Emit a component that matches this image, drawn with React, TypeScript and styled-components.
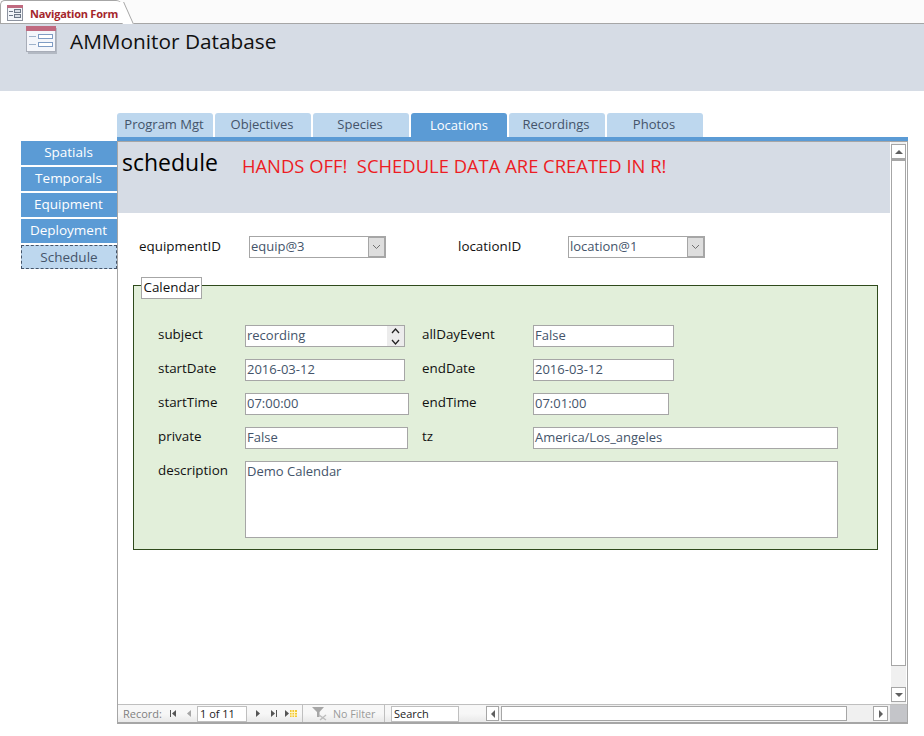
import React from 'react';
import styled, { createGlobalStyle } from 'styled-components';

const GlobalStyle = createGlobalStyle`
    html, body {
        margin: 0;
        padding: 0;
        background: #fff;
        font-family: "Open Sans", "Noto Sans", sans-serif;
    }
`;

const Page = styled.div`
    width: 924px;
    height: 736px;
    overflow: hidden;
    background: #fff;
`;

const DocStrip = styled.div`
    height: 23px;
    border-bottom: 1px solid #a6a6a6;
    background: #fbfbfb;
`;

const DocTab = styled.div`
    position: relative;
    width: 122px;
    height: 23px;
    margin-bottom: -1px;
    box-sizing: border-box;
    padding: 2px 0 0 6px;
    display: flex;
    align-items: center;
    gap: 7px;
    background: #fff;
    border-top: 1px solid #a6a6a6;
    border-left: 1px solid #a6a6a6;
    border-top-left-radius: 5px;
    border-top-right-radius: 6px;
    z-index: 1;

    &::after {
        content: '';
        position: absolute;
        top: 1px;
        right: -7px;
        width: 10px;
        height: 22px;
        background: #fff;
        border-right: 1px solid #a6a6a6;
        transform: skewX(24deg);
    }
`;

const DocTabLabel = styled.span`
    position: relative;
    z-index: 1;
    font-size: 11px;
    font-weight: 700;
    letter-spacing: -0.25px;
    color: #a4262c;
`;

const Header = styled.div`
    height: 67px;
    box-sizing: border-box;
    background: #d6dce5;
    padding: 1px 0 0 26px;
    display: flex;
    align-items: flex-start;
    gap: 12px;
`;

const AppTitle = styled.h1`
    margin: 0;
    font-size: 20.8px;
    line-height: 33px;
    font-weight: 400;
    color: #111;
`;

const Body = styled.div`
    display: flex;
    padding: 22px 0 0 21px;
`;

const SideNav = styled.nav`
    width: 96px;
    padding-top: 28px;
    display: flex;
    flex-direction: column;
    gap: 2px;
`;

const SideButton = styled.div<{ $active?: boolean }>`
    height: 24px;
    box-sizing: border-box;
    display: flex;
    align-items: center;
    justify-content: center;
    padding: 0 ${(p) => (p.$active ? 0 : 1)}px ${(p) => (p.$active ? 0 : 2)}px 0;
    font-size: 13.5px;
    color: ${(p) => (p.$active ? '#44546a' : '#fff')};
    background: ${(p) => (p.$active ? '#bdd7ee' : '#5b9bd5')};
    border: ${(p) => (p.$active ? '1px dashed #44546a' : 'none')};
`;

const Main = styled.div`
    width: 791px;
`;

const TabRow = styled.div`
    display: flex;
    gap: 2px;
    height: 24px;
`;

const TopTab = styled.div<{ $active?: boolean }>`
    width: 96px;
    height: 24px;
    box-sizing: border-box;
    display: flex;
    align-items: center;
    justify-content: center;
    padding: 0 ${(p) => (p.$active ? 0 : 2)}px ${(p) => (p.$active ? 0 : 2)}px 0;
    border-radius: 3px 3px 0 0;
    font-size: 13px;
    color: ${(p) => (p.$active ? '#fff' : '#44546a')};
    background: ${(p) => (p.$active ? '#5b9bd5' : '#bdd7ee')};
`;

const BlueBar = styled.div`
    height: 4px;
    background: #5b9bd5;
`;

const SubForm = styled.div`
    height: 583px;
    box-sizing: border-box;
    display: flex;
    flex-direction: column;
    border-top: 1px solid #a6a6a6;
    border-left: 1px solid #a6a6a6;
    border-right: 1px solid #a6a6a6;
    border-bottom: 2px solid #a6a6a6;
`;

const SubFormTop = styled.div`
    flex: 1;
    min-height: 0;
    display: flex;
`;

const FormArea = styled.div`
    width: 772px;
`;

const FormHeader = styled.div`
    height: 71px;
    box-sizing: border-box;
    background: #d6dce5;
    padding: 1px 0 0 4px;
    display: flex;
    align-items: flex-start;
    gap: 24px;
`;

const FormTitle = styled.div`
    font-size: 23px;
    line-height: 38px;
    color: #000;
`;

const Warning = styled.div`
    margin-top: 8px;
    font-size: 18.4px;
    line-height: 30px;
    white-space: pre;
    color: #ed1c24;
`;

const PickerRow = styled.div`
    display: flex;
    align-items: flex-start;
    padding: 23px 0 0 21px;
`;

const Label = styled.div<{ $w: number }>`
    width: ${(p) => p.$w}px;
    flex: none;
    font-size: 13.4px;
    line-height: 18px;
    color: #111;
`;

const PickerLabel = styled(Label)`
    margin-top: 1px;
`;

const TextBox = styled.div<{ $w: number; $h?: number }>`
    width: ${(p) => p.$w}px;
    height: ${(p) => p.$h ?? 22}px;
    flex: none;
    box-sizing: border-box;
    border: 1px solid #a6a6a6;
    background: #fff;
    padding: 0 1px;
    font-size: 13px;
    line-height: 19px;
    color: #44546a;
    display: flex;
    justify-content: space-between;
`;

const Combo = styled(TextBox)`
    margin-right: 72px;
    padding-right: 0;
`;

const ComboArrow = styled.div`
    width: 17px;
    height: 20px;
    box-sizing: border-box;
    background: #dedede;
    border: 1px solid #a6a6a6;
    display: flex;
    align-items: center;
    justify-content: center;
`;

const Spinner = styled.div`
    width: 17px;
    height: 20px;
    margin-right: -1px;
    background: #ececec;
    display: flex;
    flex-direction: column;
    align-items: center;
    justify-content: space-between;
    padding: 2px 0 1px;
    box-sizing: border-box;
`;

const Frame = styled.div`
    position: relative;
    width: 745px;
    height: 265px;
    margin: 27px 0 0 15px;
    box-sizing: border-box;
    background: #e2efda;
    border: 1px solid #2f4a1c;
    padding: 39px 0 0 24px;
    display: flex;
    flex-direction: column;
    gap: 12px;
`;

const Legend = styled.div`
    position: absolute;
    left: 7px;
    top: -9px;
    width: 61px;
    height: 22px;
    box-sizing: border-box;
    background: #fff;
    border: 1px solid #a6a6a6;
    font-size: 13.4px;
    line-height: 19px;
    text-align: center;
    color: #111;
`;

const FieldRow = styled.div`
    display: flex;
`;

const Gap = styled.div<{ $w: number }>`
    width: ${(p) => p.$w}px;
    flex: none;
`;

const VScroll = styled.div`
    width: 15px;
    margin-left: 1px;
    padding: 2px 0 2px;
    display: flex;
    flex-direction: column;
    background: #f0f0f0;
`;

const ScrollButton = styled.div<{ $w?: number; $h?: number }>`
    width: ${(p) => p.$w ?? 15}px;
    height: ${(p) => p.$h ?? 15}px;
    flex: none;
    box-sizing: border-box;
    background: #fff;
    border: 1px solid #a6a6a6;
    display: flex;
    align-items: center;
    justify-content: center;
`;

const VThumb = styled.div`
    height: 507px;
    flex: none;
    box-sizing: border-box;
    background: #fff;
    border: 1px solid #a6a6a6;
    border-top-width: 2px;
`;

const Spacer = styled.div`
    flex: 1;
`;

const StatusBar = styled.div`
    height: 18px;
    flex: none;
    box-sizing: border-box;
    display: flex;
    align-items: center;
    border-top: 1px solid #bfbfbf;
    background: linear-gradient(#f7f7f7, #f7f7f7 50%, #e9e9e9);
    font-size: 11px;
    color: #7f7f7f;
`;

const RecordLabel = styled.span`
    margin-left: 5px;
    width: 47px;
`;

const NavIcon = styled.svg<{ $left: number; $right?: number }>`
    flex: none;
    display: block;
    margin-left: ${(p) => p.$left}px;
    margin-right: ${(p) => p.$right ?? 0}px;
`;

const RecordBox = styled.div`
    width: 50px;
    height: 16px;
    box-sizing: border-box;
    border: 1px solid #bfbfbf;
    background: #fff;
    padding-left: 2px;
    font-size: 11px;
    line-height: 14px;
    color: #222;
`;

const Divider = styled.div`
    width: 1px;
    height: 17px;
    flex: none;
    background: #bfbfbf;
`;

const FilterText = styled.span`
    width: 51px;
    margin-left: 3px;
    font-size: 10.7px;
    color: #9a9a9a;
`;

const SearchBox = styled(RecordBox)`
    width: 68px;
    margin-left: 6px;
`;

const HScroll = styled.div`
    margin-left: 27px;
    flex: 1;
    height: 17px;
    display: flex;
    align-items: center;
    background: #f0f0f0;
`;

const HThumb = styled.div`
    width: 346px;
    height: 15px;
    margin-left: 2px;
    flex: none;
    box-sizing: border-box;
    background: #fff;
    border: 1px solid #a6a6a6;
`;

const Corner = styled.div`
    width: 17px;
    height: 17px;
    flex: none;
    margin-left: 2px;
    background: #c4c5c9;
`;

const FormGlyph = ({ size }: { size: 'large' | 'small' }) =>
    size === 'large' ? (
        <svg width="32" height="30" viewBox="0 0 32 30">
            <rect x="2" y="3" width="29" height="26" fill="#8a8f99" opacity="0.45" />
            <rect x="0.5" y="1.5" width="29" height="25" fill="#f4f6fb" stroke="#a8adb8" />
            <rect x="0" y="1" width="30" height="5" fill="#c0697f" />
            <rect x="3" y="11" width="7" height="1" fill="#9fb3cc" />
            <rect x="3" y="19" width="7" height="1" fill="#9fb3cc" />
            <rect x="12.5" y="9.5" width="14" height="4" fill="#fff" stroke="#7f9cc4" />
            <rect x="12.5" y="17.5" width="14" height="4" fill="#fff" stroke="#7f9cc4" />
        </svg>
    ) : (
        <svg width="16" height="16" viewBox="0 0 16 16">
            <rect x="0.5" y="0.5" width="15" height="15" fill="#f3f5f9" stroke="#8d93a0" />
            <rect x="0" y="0" width="16" height="3" fill="#c0697f" />
            <rect x="2" y="6" width="4" height="1" fill="#6c7686" />
            <rect x="2" y="10" width="4" height="1" fill="#6c7686" />
            <rect x="7.5" y="4.5" width="6" height="3" fill="#d8dde5" stroke="#6c7686" />
            <rect x="7.5" y="9.5" width="6" height="3" fill="#d8dde5" stroke="#6c7686" />
        </svg>
    );

const Chevron = () => (
    <svg width="9" height="6" viewBox="0 0 9 6">
        <path d="M1 1 L4.5 4.5 L8 1" fill="none" stroke="#707070" strokeWidth="1" />
    </svg>
);

const SpinChevron = ({ up }: { up?: boolean }) => (
    <svg width="9" height="6" viewBox="0 0 9 6">
        <path d={up ? 'M1 5 L4.5 1 L8 5' : 'M1 1 L4.5 5 L8 1'} fill="none" stroke="#222" strokeWidth="1.3" />
    </svg>
);

const Arrow = ({ dir }: { dir: 'up' | 'down' | 'left' | 'right' }) => {
    const d = {
        up: 'M0 5 L4 1 L8 5 Z',
        down: 'M0 1 L8 1 L4 5 Z',
        left: 'M5 0 L5 8 L1 4 Z',
        right: 'M1 0 L5 4 L1 8 Z',
    }[dir];
    const horizontal = dir === 'left' || dir === 'right';
    return (
        <svg width={horizontal ? 6 : 8} height={horizontal ? 8 : 6} viewBox={horizontal ? '0 0 6 8' : '0 0 8 6'}>
            <path d={d} fill="#606060" />
        </svg>
    );
};

const FirstIcon = () => (
    <NavIcon $left={0} width="7" height="7" viewBox="0 0 7 7">
        <rect x="0" y="0" width="1" height="7" fill="#555" />
        <path d="M6 0 V7 L2 3.5 Z" fill="#555" />
    </NavIcon>
);

const PrevIcon = () => (
    <NavIcon $left={10} $right={5} width="5" height="7" viewBox="0 0 5 7">
        <path d="M4 0 V7 L0 3.5 Z" fill="#a6a6a6" />
    </NavIcon>
);

const NextIcon = () => (
    <NavIcon $left={9} width="5" height="7" viewBox="0 0 5 7">
        <path d="M0 0 V7 L4 3.5 Z" fill="#555" />
    </NavIcon>
);

const LastIcon = () => (
    <NavIcon $left={10} width="7" height="7" viewBox="0 0 7 7">
        <path d="M0 0 V7 L4 3.5 Z" fill="#555" />
        <rect x="5" y="0" width="1" height="7" fill="#555" />
    </NavIcon>
);

const NewIcon = () => (
    <NavIcon $left={7} $right={5} width="12" height="7" viewBox="0 0 12 7">
        <path d="M0 0 V7 L4 3.5 Z" fill="#555" />
        <rect x="5" y="0" width="7" height="7" fill="#f2c832" />
        <path d="M7 0 V7 M9.5 0 V7 M5 2.5 H12 M5 5 H12" stroke="#fff4c4" strokeWidth="1" />
    </NavIcon>
);

const FilterIcon = () => (
    <NavIcon $left={9} width="18" height="15" viewBox="0 0 18 15">
        <path d="M0 1 H12 L7.5 6 V11 H5 V6 Z" fill="#a6a6a6" />
        <path d="M7 9 L14 14 M14 9 L8 14" stroke="#bdbdbd" strokeWidth="1.4" />
    </NavIcon>
);

const sideItems = ['Spatials', 'Temporals', 'Equipment', 'Deployment', 'Schedule'];
const topTabs = ['Program Mgt', 'Objectives', 'Species', 'Locations', 'Recordings', 'Photos'];

export default function App() {
    return (
        <Page>
            <GlobalStyle />
            <DocStrip>
                <DocTab>
                    <FormGlyph size="small" />
                    <DocTabLabel>Navigation Form</DocTabLabel>
                </DocTab>
            </DocStrip>
            <Header>
                <FormGlyph size="large" />
                <AppTitle>AMMonitor Database</AppTitle>
            </Header>
            <Body>
                <SideNav>
                    {sideItems.map((item) => (
                        <SideButton key={item} $active={item === 'Schedule'}>
                            {item}
                        </SideButton>
                    ))}
                </SideNav>
                <Main>
                    <TabRow>
                        {topTabs.map((tab) => (
                            <TopTab key={tab} $active={tab === 'Locations'}>
                                {tab}
                            </TopTab>
                        ))}
                    </TabRow>
                    <BlueBar />
                    <SubForm>
                        <SubFormTop>
                            <FormArea>
                                <FormHeader>
                                    <FormTitle>schedule</FormTitle>
                                    <Warning>HANDS OFF!  SCHEDULE DATA ARE CREATED IN R!</Warning>
                                </FormHeader>
                                <PickerRow>
                                    <PickerLabel $w={110}>equipmentID</PickerLabel>
                                    <Combo $w={137}>
                                        equip@3
                                        <ComboArrow><Chevron /></ComboArrow>
                                    </Combo>
                                    <PickerLabel $w={110}>locationID</PickerLabel>
                                    <Combo $w={137}>
                                        location@1
                                        <ComboArrow><Chevron /></ComboArrow>
                                    </Combo>
                                </PickerRow>
                                <Frame>
                                    <Legend>Calendar</Legend>
                                    <FieldRow>
                                        <Label $w={87}>subject</Label>
                                        <TextBox $w={160}>
                                            recording
                                            <Spinner>
                                                <SpinChevron up />
                                                <SpinChevron />
                                            </Spinner>
                                        </TextBox>
                                        <Gap $w={17} />
                                        <Label $w={111}>allDayEvent</Label>
                                        <TextBox $w={141}>False</TextBox>
                                    </FieldRow>
                                    <FieldRow>
                                        <Label $w={87}>startDate</Label>
                                        <TextBox $w={160}>2016-03-12</TextBox>
                                        <Gap $w={17} />
                                        <Label $w={111}>endDate</Label>
                                        <TextBox $w={141}>2016-03-12</TextBox>
                                    </FieldRow>
                                    <FieldRow>
                                        <Label $w={87}>startTime</Label>
                                        <TextBox $w={164}>07:00:00</TextBox>
                                        <Gap $w={13} />
                                        <Label $w={111}>endTime</Label>
                                        <TextBox $w={136}>07:01:00</TextBox>
                                    </FieldRow>
                                    <FieldRow>
                                        <Label $w={87}>private</Label>
                                        <TextBox $w={163}>False</TextBox>
                                        <Gap $w={14} />
                                        <Label $w={111}>tz</Label>
                                        <TextBox $w={305}>America/Los_angeles</TextBox>
                                    </FieldRow>
                                    <FieldRow>
                                        <Label $w={87}>description</Label>
                                        <TextBox $w={593} $h={77}>Demo Calendar</TextBox>
                                    </FieldRow>
                                </Frame>
                            </FormArea>
                            <VScroll>
                                <ScrollButton><Arrow dir="up" /></ScrollButton>
                                <VThumb />
                                <Spacer />
                                <ScrollButton><Arrow dir="down" /></ScrollButton>
                            </VScroll>
                        </SubFormTop>
                        <StatusBar>
                            <RecordLabel>Record:</RecordLabel>
                            <FirstIcon />
                            <PrevIcon />
                            <RecordBox>1 of 11</RecordBox>
                            <NextIcon />
                            <LastIcon />
                            <NewIcon />
                            <Divider />
                            <FilterIcon />
                            <FilterText>No Filter</FilterText>
                            <Divider />
                            <SearchBox>Search</SearchBox>
                            <HScroll>
                                <ScrollButton $w={13} $h={15}><Arrow dir="left" /></ScrollButton>
                                <HThumb />
                                <Spacer />
                                <ScrollButton $w={15} $h={15}><Arrow dir="right" /></ScrollButton>
                                <Corner />
                            </HScroll>
                        </StatusBar>
                    </SubForm>
                </Main>
            </Body>
        </Page>
    );
}
